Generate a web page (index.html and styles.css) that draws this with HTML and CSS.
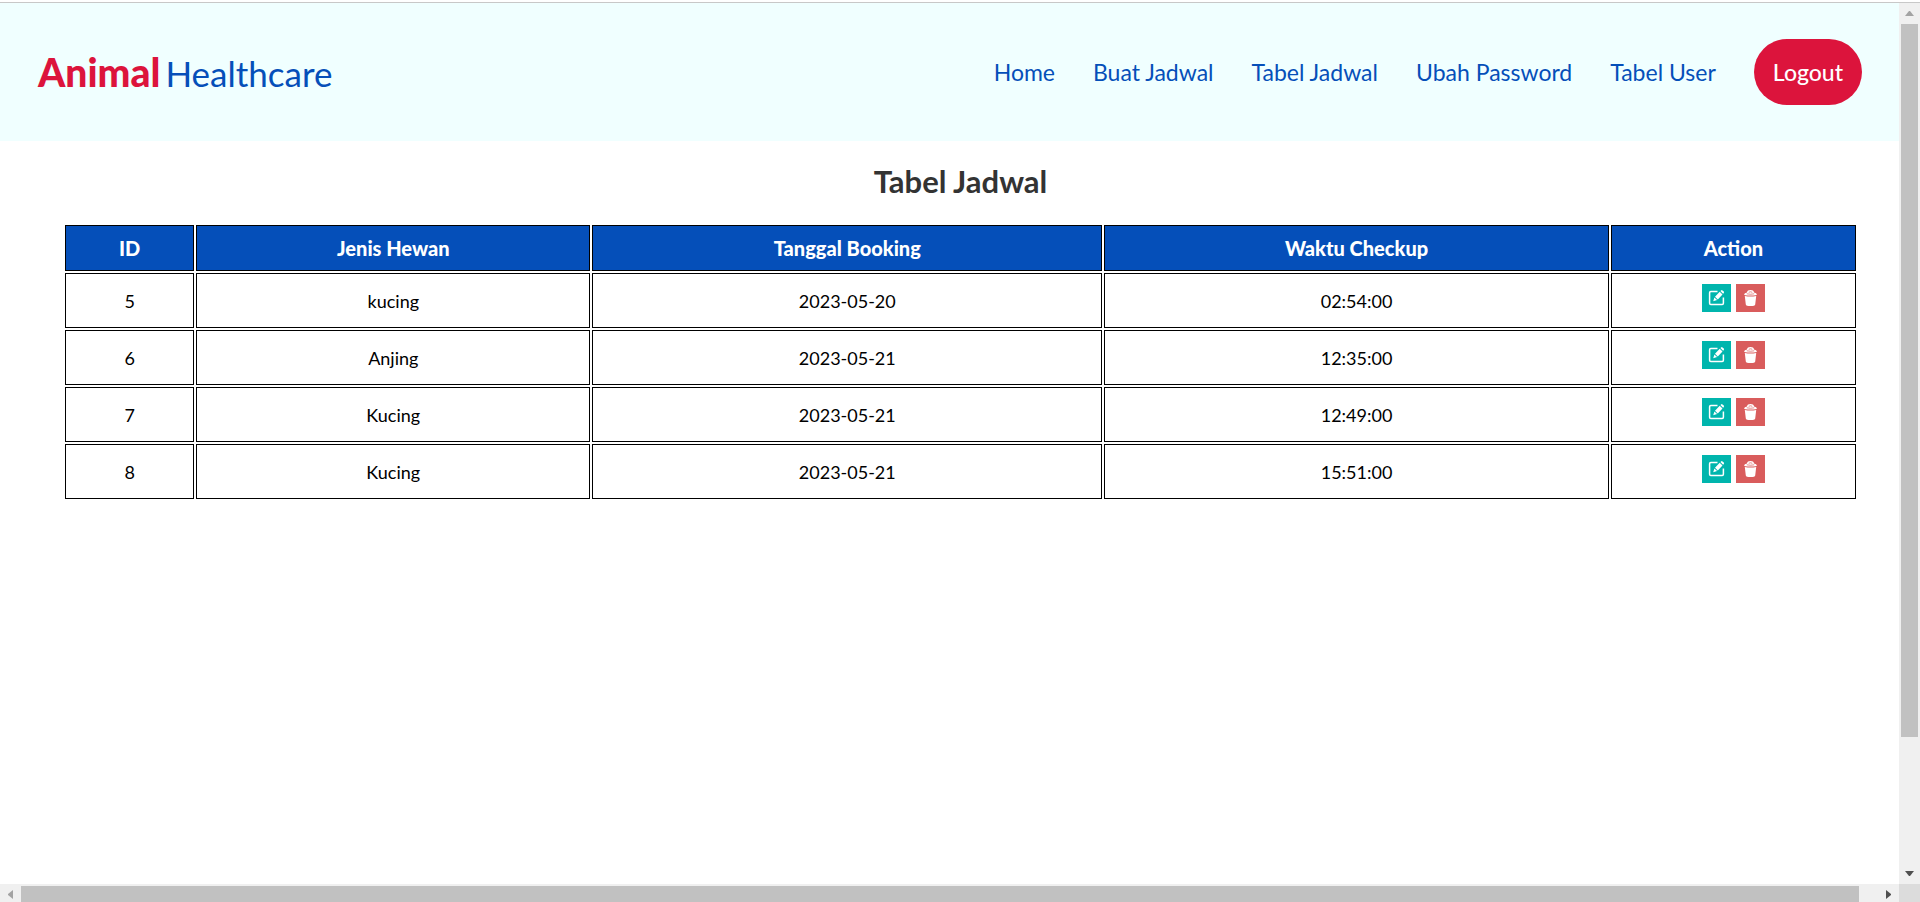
FILE: index.html
```html
<!DOCTYPE html>
<html lang="id">
<head>
<meta charset="utf-8">
<title>Tabel Jadwal</title>
<link rel="stylesheet" href="styles.css">
</head>
<body>
<svg class="sprite" aria-hidden="true">
  <symbol id="edit" viewBox="0 0 28 28">
    <path d="M15.500 7.500H8.800a1.200 1.200 0 0 0-1.200 1.200v10.600a1.200 1.200 0 0 0 1.200 1.200h11.400a1.200 1.200 0 0 0 1.200-1.200V13.500" fill="none" stroke="#fff" stroke-width="1.500"/>
    <path d="M11.200 17.300l1.200-3.800 2.700 2.400zM13 12.700l4.700-4.900 2.800 2.700-4.700 4.900zM18.400 7.100l.7-.7q.7-.6 1.400 0l1.300 1.200q.6.700 0 1.400l-.7.700z" fill="#fff"/>
  </symbol>
  <symbol id="trash" viewBox="0 0 28 28">
    <path d="M8.100 10.500q.2-1.500 2.900-2 .4-2.400 3.500-2.400t3.500 2.400q2.700.5 2.900 2 0 1.100-6.400 1.100t-6.400-1.100z" fill="#fff"/>
    <path d="M10.800 9.800q3.700.9 7.400 0M12.700 8.300q1.800-1 3.600 0" fill="none" stroke="#d95c5c" stroke-width=".7"/>
    <path d="M8.800 12q5.700 1 11.400 0l-1 8.500q-.2 1.500-4.700 1.500t-4.700-1.500z" fill="#fff"/>
  </symbol>
</svg>
<div class="page">
  <header class="header">
    <a class="logo" href="#"><strong>Animal</strong><span>Healthcare</span></a>
    <nav class="nav">
      <a href="#">Home</a>
      <a href="#">Buat Jadwal</a>
      <a href="#">Tabel Jadwal</a>
      <a href="#">Ubah Password</a>
      <a href="#">Tabel User</a>
      <button class="logout" type="button">Logout</button>
    </nav>
  </header>
  <main class="main">
    <h1>Tabel Jadwal</h1>
    <table class="schedule">
      <colgroup><col class="c-id"><col class="c-animal"><col class="c-date"><col class="c-time"><col class="c-action"></colgroup>
      <thead>
        <tr><th>ID</th><th>Jenis Hewan</th><th>Tanggal Booking</th><th>Waktu Checkup</th><th>Action</th></tr>
      </thead>
      <tbody>
        <tr><td>5</td><td>kucing</td><td>2023-05-20</td><td>02:54:00</td><td><div class="actions"><a class="edit" href="#" aria-label="Edit 5"><svg><use href="#edit"/></svg></a><a class="delete" href="#" aria-label="Hapus 5"><svg><use href="#trash"/></svg></a></div></td></tr>
        <tr><td>6</td><td>Anjing</td><td>2023-05-21</td><td>12:35:00</td><td><div class="actions"><a class="edit" href="#" aria-label="Edit 6"><svg><use href="#edit"/></svg></a><a class="delete" href="#" aria-label="Hapus 6"><svg><use href="#trash"/></svg></a></div></td></tr>
        <tr><td>7</td><td>Kucing</td><td>2023-05-21</td><td>12:49:00</td><td><div class="actions"><a class="edit" href="#" aria-label="Edit 7"><svg><use href="#edit"/></svg></a><a class="delete" href="#" aria-label="Hapus 7"><svg><use href="#trash"/></svg></a></div></td></tr>
        <tr><td>8</td><td>Kucing</td><td>2023-05-21</td><td>15:51:00</td><td><div class="actions"><a class="edit" href="#" aria-label="Edit 8"><svg><use href="#edit"/></svg></a><a class="delete" href="#" aria-label="Hapus 8"><svg><use href="#trash"/></svg></a></div></td></tr>
      </tbody>
    </table>
  </main>
</div>
<div class="bar vertical" aria-hidden="true">
  <div class="end"><svg class="arrow dim" viewBox="0 0 9 9"><path d="M0 7h9L5 2H4z"/></svg></div>
  <div class="thumb"></div><div class="rest"></div>
  <div class="end"><svg class="arrow" viewBox="0 0 9 9"><path d="M0 2h9L5 7H4z"/></svg></div>
</div>
<div class="bar horizontal" aria-hidden="true">
  <div class="end"><svg class="arrow dim" viewBox="0 0 9 9"><path d="M7 0v9L2 5V4z"/></svg></div>
  <div class="thumb"></div><div class="rest"></div>
  <div class="end"><svg class="arrow" viewBox="0 0 9 9"><path d="M2 0v9l5-4V4z"/></svg></div>
</div>
<div class="corner"></div>
</body>
</html>
```
FILE: styles.css
```css
* {
  box-sizing: border-box;
}

body {
  margin: 0;
  height: 100vh;
  padding-top: 2px;
  display: grid;
  grid-template-columns: minmax(0, 1fr) 21px;
  grid-template-rows: minmax(0, 1fr) 18px;
  background: #fff;
  color: #000;
  font-family: "Gill Sans", "Gill Sans MT", Lato, sans-serif;
}

a {
  color: inherit;
  text-decoration: none;
}

.sprite {
  position: absolute;
  width: 0;
  height: 0;
}

.page,
.vertical {
  border-top: 1px solid #c8c8c8;
}

.page {
  overflow: hidden;
}

.header {
  display: flex;
  align-items: center;
  justify-content: space-between;
  padding: 36px 37px 36px 38px;
  background: #f0ffff;
  color: #054fb9;
}

.logo {
  display: flex;
  align-items: baseline;
  gap: 5px;
  font-size: 35px;
  line-height: 48px;
}

.logo strong {
  color: #dc143c;
  font-size: 39px;
  font-weight: 900;
}

.nav {
  display: flex;
  align-items: center;
  gap: 38px;
  font-size: 23px;
}

.logout {
  height: 66px;
  padding: 0 19px;
  border: 0;
  border-radius: 33px;
  background: #dc143c;
  color: #fff;
  font: inherit;
  font-weight: 500;
}

.main {
  padding: 20px 41px 20px 63px;
}

h1 {
  margin: 0 0 22px;
  color: #333;
  font-size: 31px;
  line-height: 40px;
  text-align: center;
}

.schedule {
  width: 100%;
  table-layout: fixed;
  border-collapse: separate;
  border-spacing: 2px;
  font-size: 18px;
  text-align: center;
}

.c-id { width: 7.25%; }
.c-animal { width: 22.1%; }
.c-date { width: 28.6%; }
.c-time { width: 28.3%; }

.schedule th,
.schedule td {
  padding: 10px;
  border: 1px solid #000;
}

.schedule th {
  background: #054fb9;
  color: #fff;
  font-size: 20px;
  font-weight: 900;
  line-height: 24px;
}

.schedule td {
  padding-bottom: 9px;
}

.actions {
  display: flex;
  justify-content: center;
  gap: 5px;
  padding-bottom: 6px;
}

.actions a {
  width: 29px;
  height: 28px;
}

.actions svg {
  display: block;
  width: 28px;
  height: 28px;
}

.edit { background: #00b5ad; }
.delete { background: #d95c5c; }

.bar {
  display: flex;
  background: #f0f0f0;
}

.vertical {
  flex-direction: column;
  padding: 0 2px;
}

.horizontal {
  padding-top: 2px;
}

.end {
  flex: 0 0 21px;
  display: flex;
  align-items: center;
  justify-content: center;
}

.arrow {
  width: 9px;
  height: 9px;
  fill: #505050;
}

.dim { fill: #a3a3a3; }

.thumb { background: #c1c1c1; }

.vertical .thumb { flex: 85; }
.vertical .rest { flex: 15; }
.horizontal .thumb { flex: 99; }
.horizontal .rest { flex: 1; }

.corner { background: #dcdcdc; }
```
